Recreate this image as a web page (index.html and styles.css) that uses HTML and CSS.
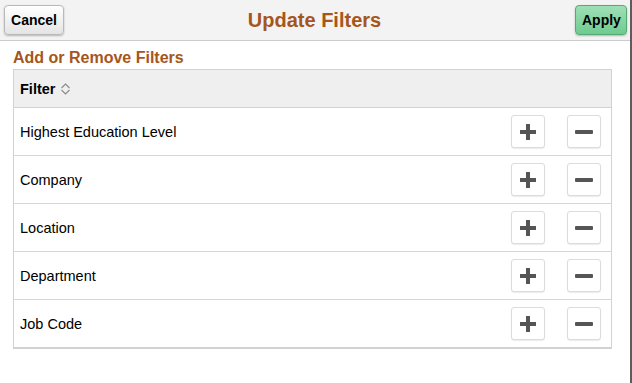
FILE: index.html
```html
<!DOCTYPE html>
<html>
<head>
	<meta charset="utf-8">
	<link rel="stylesheet" href="styles.css">
</head>
<body>
	<div class='page'>

		<!--
			Title bar
		-->
		<div class='titlebar'>
			<a href='#' class='btn btn-cancel'>Cancel</a>
			<div class='title'>Update Filters</div>
			<a href='#' class='btn btn-apply'>Apply</a>
		</div>

		<div class='content'>
			<div class='heading'>Add or Remove Filters</div>

			<div class='grid'>
				<div class='grid-head'>
					<span>Filter</span>
					<svg class='sort' width='11' height='12' viewBox='0 0 11 12'>
						<path d='M1.5 5 L5.5 1 L9.5 5 M1.5 7 L5.5 11 L9.5 7' fill='none' stroke='#8a8a8a' stroke-width='1.1'/>
					</svg>
				</div>

				<div class='row'>
					<div class='label'>Highest Education Level</div>
					<a href='#' class='icon-btn'><svg width='16' height='16' viewBox='0 0 16 16'><path d='M6 0h4v6h6v4h-6v6h-4v-6h-6v-4h6z' fill='#555'/></svg></a>
					<a href='#' class='icon-btn'><svg width='18' height='16' viewBox='0 0 18 16'><rect x='0' y='6' width='18' height='4' rx='1' fill='#555'/></svg></a>
				</div>
				<div class='row'>
					<div class='label'>Company</div>
					<a href='#' class='icon-btn'><svg width='16' height='16' viewBox='0 0 16 16'><path d='M6 0h4v6h6v4h-6v6h-4v-6h-6v-4h6z' fill='#555'/></svg></a>
					<a href='#' class='icon-btn'><svg width='18' height='16' viewBox='0 0 18 16'><rect x='0' y='6' width='18' height='4' rx='1' fill='#555'/></svg></a>
				</div>
				<div class='row'>
					<div class='label'>Location</div>
					<a href='#' class='icon-btn'><svg width='16' height='16' viewBox='0 0 16 16'><path d='M6 0h4v6h6v4h-6v6h-4v-6h-6v-4h6z' fill='#555'/></svg></a>
					<a href='#' class='icon-btn'><svg width='18' height='16' viewBox='0 0 18 16'><rect x='0' y='6' width='18' height='4' rx='1' fill='#555'/></svg></a>
				</div>
				<div class='row'>
					<div class='label'>Department</div>
					<a href='#' class='icon-btn'><svg width='16' height='16' viewBox='0 0 16 16'><path d='M6 0h4v6h6v4h-6v6h-4v-6h-6v-4h6z' fill='#555'/></svg></a>
					<a href='#' class='icon-btn'><svg width='18' height='16' viewBox='0 0 18 16'><rect x='0' y='6' width='18' height='4' rx='1' fill='#555'/></svg></a>
				</div>
				<div class='row last'>
					<div class='label'>Job Code</div>
					<a href='#' class='icon-btn'><svg width='16' height='16' viewBox='0 0 16 16'><path d='M6 0h4v6h6v4h-6v6h-4v-6h-6v-4h6z' fill='#555'/></svg></a>
					<a href='#' class='icon-btn'><svg width='18' height='16' viewBox='0 0 18 16'><rect x='0' y='6' width='18' height='4' rx='1' fill='#555'/></svg></a>
				</div>
			</div>
		</div>
	</div>
</body>
</html>
```

FILE: styles.css
```css
body
{
	margin: 0;
	padding: 0;
	background-color: white;
	font-family: "Liberation Sans", Arial, sans-serif;
	font-size: 14.5px;
	color: #000;
}

.page
{
	width: 632px;
	height: 383px;
	box-sizing: border-box;
	border-right: 2px solid #5c5c5c;
}


/*
	Title bar
*/
.titlebar
{
	height: 40px;
	background-color: #f3f3f3;
	border-bottom: 1px solid #cbcbcb;
	display: flex;
	align-items: center;
	padding: 0 3px 0 4px;
}
.title
{
	flex: 1;
	text-align: center;
	font-size: 20px;
	font-weight: bold;
	color: #a5561c;
	padding-right: 10px;
}
.btn
{
	display: block;
	height: 28px;
	line-height: 28px;
	padding: 0 6px;
	border-radius: 4px;
	font-weight: bold;
	font-size: 14px;
	color: #000;
	text-decoration: none;
}
.btn-cancel
{
	width: 46px;
	text-align: center;
	border: 1px solid #b9b9b9;
	background: linear-gradient(#ffffff, #e4e4e4);
	box-shadow: 0 1px 2px rgba(0, 0, 0, 0.25);
}
.btn-apply
{
	width: 38px;
	text-align: center;
	border: 1px solid #55aa72;
	background: linear-gradient(#9ee0b6, #6fca91);
	box-shadow: 0 1px 2px rgba(0, 0, 0, 0.25);
}


/*
	Filters
*/
.content
{
	padding: 8px 18px 0 13px;
}
.heading
{
	font-size: 16px;
	line-height: 18px;
	font-weight: bold;
	color: #a5561c;
	margin-bottom: 2px;
}
.grid
{
	border: 1px solid #d2d2d2;
	border-bottom: 2px solid #d2d2d2;
}
.grid-head
{
	height: 37px;
	background-color: #efefef;
	border-bottom: 1px solid #d2d2d2;
	display: flex;
	align-items: center;
	padding-left: 6px;
	font-weight: bold;
}
.sort
{
	margin-left: 5px;
}
.row
{
	height: 47px;
	border-bottom: 1px solid #d6d6d6;
	display: flex;
	align-items: center;
	padding: 0 10px 0 6px;
}
.row.last
{
	border-bottom: 0;
}
.label
{
	flex: 1;
}
.icon-btn
{
	width: 32px;
	height: 31px;
	border: 1px solid #dcdcdc;
	border-radius: 3px;
	background-color: white;
	box-shadow: 0 1px 1px rgba(0, 0, 0, 0.08);
	display: flex;
	align-items: center;
	justify-content: center;
	margin-left: 22px;
}
```
